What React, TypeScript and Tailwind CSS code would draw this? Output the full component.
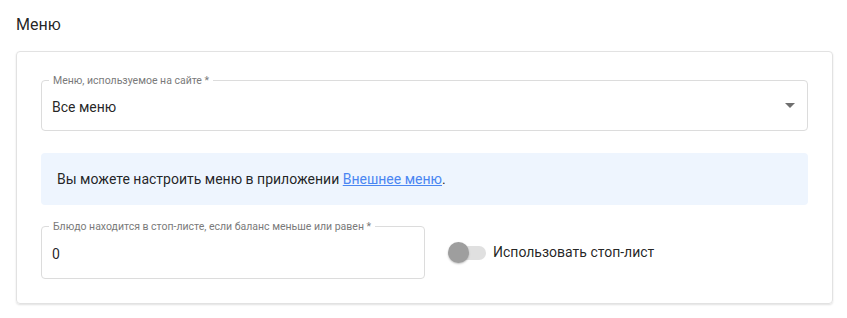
import React from "react";

function Outlined({ label, children, className }: { label: string; children: React.ReactNode; className?: string }) {
  return (
    <div className={"relative rounded border border-[#dcdcdc] " + (className ?? "")}>
      <span className="absolute -top-[7px] left-[7px] bg-white px-[4px] text-[10.5px] leading-[13px] text-[#7a7a7a]">
        {label}
      </span>
      {children}
    </div>
  );
}

export default function App() {
  return (
    <div className="min-h-[318px] w-[847px] bg-white px-4 pt-[14px] font-['Roboto',sans-serif] text-[rgba(0,0,0,0.87)]">
      <h2 className="text-[16px] leading-[22px]">Меню</h2>
      <div className="mt-[15px] w-[817px] rounded border border-[#e2e2e2] px-6 pb-6 pt-[28px] shadow-[0_1px_2px_rgba(0,0,0,0.12)]">
        <Outlined label="Меню, используемое на сайте *" className="h-[51px]">
          <div className="flex h-full items-center justify-between pl-[10px] pr-[12px] pt-[4px]">
            <span className="text-[14px]">Все меню</span>
            <svg width="10" height="5" viewBox="0 0 10 5" className="mt-[-4px]">
              <path d="M0 0 L10 0 L5 5 Z" fill="#6f6f6f" />
            </svg>
          </div>
        </Outlined>
        <div className="mt-[22px] flex h-[52px] items-center rounded bg-[#eef5fe] px-4 text-[14px]">
          <span>
            Вы можете настроить меню в приложении{" "}
            <a href="#" className="text-[#4a86f2] underline">Внешнее меню</a>.
          </span>
        </div>
        <div className="mt-[21px] flex items-center gap-6">
          <Outlined label="Блюдо находится в стоп-листе, если баланс меньше или равен *" className="h-[53px] w-[384px]">
            <div className="flex h-full items-center pl-[10px] pt-[3px] text-[14px]">0</div>
          </Outlined>
          <label className="flex items-center gap-[7px]">
            <span className="relative flex h-[20px] w-[37px] items-center">
              <span className="absolute left-[3px] h-[14px] w-[34px] rounded-full bg-[#e0e0e0]" />
              <span className="absolute -left-[1px] h-[21px] w-[21px] rounded-full bg-[#9e9e9e] shadow-[0_1px_2px_rgba(0,0,0,0.25)]" />
            </span>
            <span className="text-[14px]">Использовать стоп-лист</span>
          </label>
        </div>
      </div>
    </div>
  );
}
